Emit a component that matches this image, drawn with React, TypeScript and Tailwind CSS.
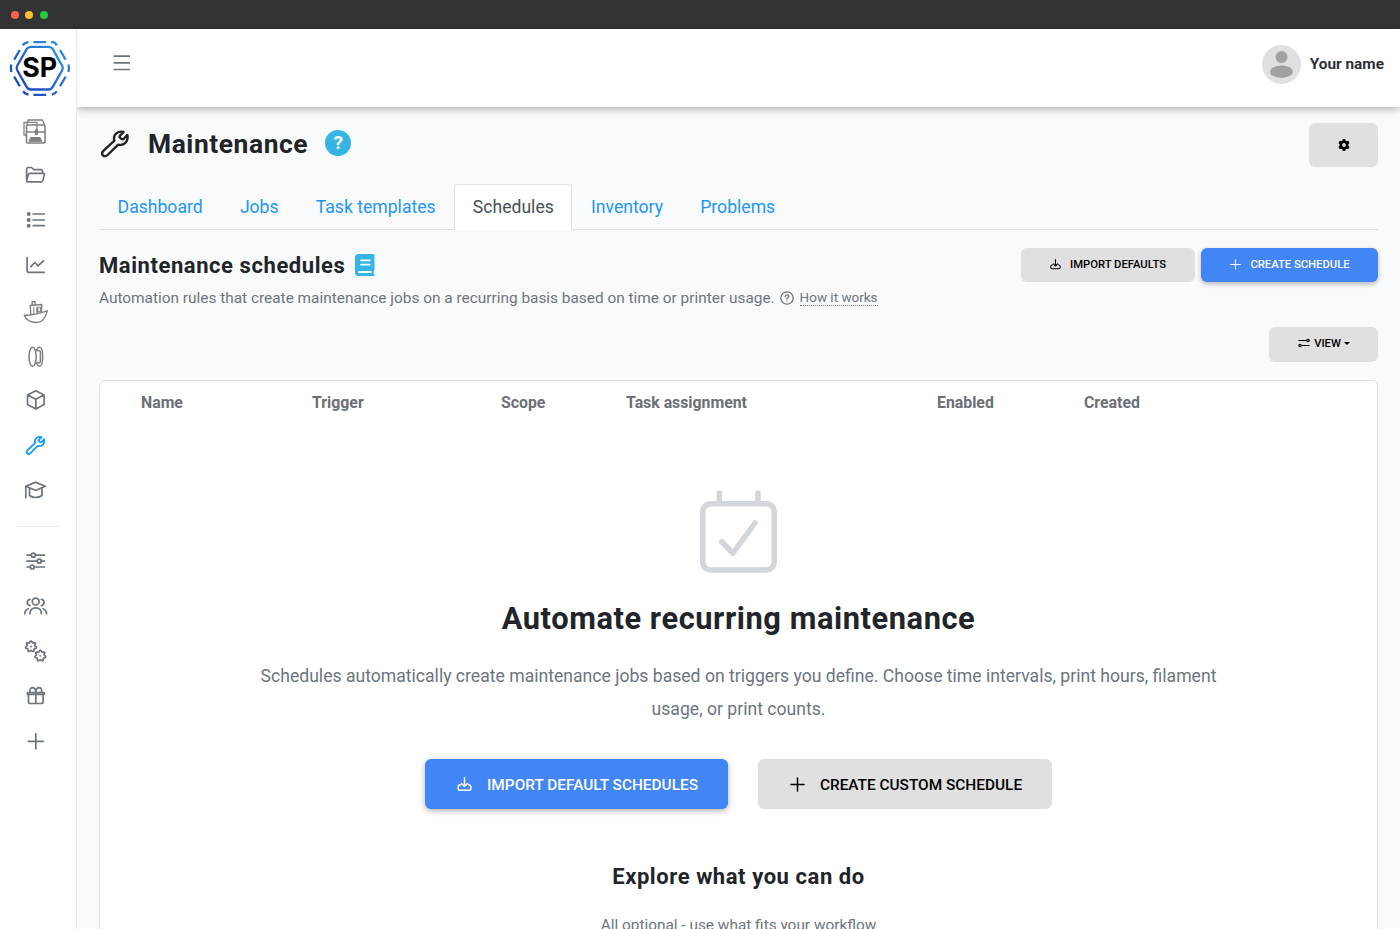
import type { ReactNode } from "react";

const tabs = ["Dashboard", "Jobs", "Task templates", "Schedules", "Inventory", "Problems"];
const activeTab = "Schedules";

const columns = ["Name", "Trigger", "Scope", "Task assignment", "Enabled", "Created"];

const wrenchPath =
  "M22.6 2C17.5.6 13 4 13 8.2c0 1 .1 1.6.4 2.4L2.4 20.8C.7 22.5.9 24.3 1.9 25.3 3.2 26.6 5.2 26.4 6.6 25L17.2 14.6C22.6 16.2 27.9 11.5 26.3 4.9L22.8 8.8Q21.6 9.8 19.9 8.6 18 7.2 19 5.6Z";

// wavy outline with seven teeth
const gearPoints = Array.from({ length: 56 }, (_, i) => {
  const angle = (i / 56) * Math.PI * 2;
  const radius = 4.7 + 0.85 * Math.cos(7 * angle);
  return `${(radius * Math.sin(angle)).toFixed(2)},${(-radius * Math.cos(angle)).toFixed(2)}`;
}).join(" ");

function WrenchIcon({ className }: { className?: string }) {
  return (
    <svg viewBox="0 0 28 28" className={className} fill="none" stroke="currentColor" strokeWidth="2.4" strokeLinejoin="round" strokeLinecap="round">
      <path d={wrenchPath} />
    </svg>
  );
}

function PlusIcon({ className }: { className?: string }) {
  return (
    <svg viewBox="0 0 16 16" className={className} fill="none" stroke="currentColor" strokeWidth="1.6" strokeLinecap="round">
      <path d="M8 1v14M1 8h14" />
    </svg>
  );
}

function ImportIcon({ className }: { className?: string }) {
  return (
    <svg viewBox="0 0 16 16" className={className} fill="none" stroke="currentColor" strokeWidth="1.6" strokeLinecap="round" strokeLinejoin="round">
      <path d="M8 .8v9M4.8 7 8 10.2 11.2 7" />
      <path d="M3.6 8.3C1.8 8.5 1.2 9.5 1.2 10.9v1.6c0 1 .7 1.7 1.7 1.7h10.2c1 0 1.7-.7 1.7-1.7v-1.6c0-1.4-.6-2.4-2.4-2.6" />
    </svg>
  );
}

function GearShape({ x, y }: { x: number; y: number }) {
  return (
    <g transform={`translate(${x} ${y})`}>
      <polygon points={gearPoints} />
      <circle r=".3" strokeWidth="1.3" />
    </g>
  );
}

function Icon({ children, active }: { children: ReactNode; active?: boolean }) {
  return (
    <li className={active ? "flex h-[45px] items-center text-[#189cf0]" : "flex h-[45px] items-center text-[#6c757d]"}>
      <svg viewBox="0 0 32 32" className="ml-[19px] h-8 w-8 overflow-visible" fill="none" stroke="currentColor" strokeWidth="1.7" strokeLinecap="round" strokeLinejoin="round">
        {children}
      </svg>
    </li>
  );
}

function Logo() {
  return (
    <svg viewBox="0 0 76 76" className="block h-[76px] w-[76px]" fill="none">
      <defs>
        <linearGradient id="logo" x1="0" y1="1" x2="1" y2="0">
          <stop offset="0" stopColor="#1d3bbd" />
          <stop offset="1" stopColor="#2a9ade" />
        </linearGradient>
      </defs>
      <g stroke="url(#logo)" strokeWidth="2.3">
        <path d="M30.5 17.8h18.4q2.4 0 3.7 2.1l9.6 16.8q1.3 2.3 0 4.6l-9.6 16.8q-1.3 2.4-3.7 2.4h-18.4q-2.4 0-3.7-2.4l-9.6-16.8q-1.3-2.3 0-4.6l9.6-16.8q1.3-2.1 3.7-2.1Z" />
        <path d="M33.5 13.2h12.7M51 13.2h2q2.5.3 3.8 3.2M60 21l5.6 9.6M68.5 35.5q.8 3.5 0 7.5M65.6 47.6l-5.6 9.7M56.8 62.2q-1.5 2.8-5 3.4M46.2 65.8H33.5M28.5 65.6q-3.6-.5-5.3-3.4M19.8 57.3l-5.6-9.7M11.3 43q-.8-3.8 0-7.5M14.2 30.6 19.8 21M22.8 16.4q1.7-2.8 5.7-3.2" />
      </g>
      <text x="39.8" y="48.4" textAnchor="middle" fill="#000" fontSize="26.8" fontWeight="700" fontFamily="Inter, sans-serif">SP</text>
    </svg>
  );
}

function Sidebar() {
  return (
    <aside className="relative z-20 w-[77px] shrink-0 border-r border-[#ececee] bg-white">
      <Logo />
      <ul className="mt-[2.5px]">
        <Icon>
          <g stroke="#808080" strokeWidth="1.6" transform="translate(.5 1.500)">
            <rect x="7" y="9.500" width="18.500" height="18" rx="1" />
            <path d="M7.500 9 8.500 4.500h14.500l2 5M6.500 7h-2v12.500h1.500M8.500 6.800h9V14M7 16.500h18" strokeWidth="1.300" />
            <path d="M17 14v5.500" strokeWidth="3.200" strokeLinecap="butt" />
            <path d="M11.500 22h9l1.800 3.800H9.700Z" fill="#808080" strokeWidth="1" />
          </g>
        </Icon>
        <Icon>
          <path d="M7.600 21V10.200Q7.600 8.500 9.300 8.500h3.200l2.300 2.200h6.900q1.800 0 1.800 1.800v1.500M10.800 14.300h13.700q1.200 0 .9 1.300l-1.500 5.900q-.4 1.400-1.800 1.400H9.300Q7.300 22.900 7.900 20.900l1.400-5.300q.3-1.300 1.500-1.300Z" />
        </Icon>
        <Icon>
          <path d="M14.200 10H25.200M14.200 16H25.200M14.200 21.700H25.200" />
          <path d="M9.700 10h0M9.700 16h0M9.700 21.700h0" strokeWidth="4" />
        </Icon>
        <Icon>
          <path d="M8.100 8.500V21.500Q8.100 23.300 9.900 23.300H25.300M11.800 17.600 15.800 13.500 19 16.800 24.500 11.800" />
        </Icon>
        <Icon>
          <g stroke="#808080" strokeWidth="1.400" transform="translate(.8 0)">
            <path d="M4.400 21.300Q16 21 27.500 16.800 24.500 28.500 17 28.500 7.500 28.600 4.400 21.300Z" />
            <path d="M11 20.200 10.400 11.500 22 10.500 21.600 18.300M12.300 11V7.800h3V11" />
            <path d="M14 13.500v6.300M17 13.500v5.500M18 13.200h2.600v4.300l-2.600.6Z" strokeWidth="1.100" />
          </g>
        </Icon>
        <Icon>
          <g stroke="#808080" strokeWidth="1.500" transform="translate(.9 0)">
            <ellipse cx="12.700" cy="17.700" rx="3.600" ry="9.500" />
            <path d="M16.800 11Q18 8.200 19.500 8.200C21.500 8.200 22.800 12 22.800 17.700S21.500 27.200 19.500 27.200Q18 27.200 16.800 24.500" />
            <path d="M15.800 11.500h2.700q2 0 2 2v8.500q0 2-2 2h-2.700" />
          </g>
        </Icon>
        <Icon>
          <path d="M16.800 6.700 25.100 11v9.500L16.800 25 8.500 20.500V11ZM8.700 11.100 16.800 15.300l8.100-4.200M16.800 15.300V25" />
        </Icon>
        <Icon active>
          <svg x="6.800" y="6.700" width="19.500" height="19.500" viewBox="0 0 28 28">
            <path d={wrenchPath} strokeWidth="2.700" />
          </svg>
        </Icon>
        <Icon>
          <path d="M6.800 12.300 15.800 8.600Q16.700 8.300 17.600 8.600L26.300 12.300 17.600 16Q16.700 16.300 15.800 16ZM6.800 12.300V23.700M10.500 14.500V21.500Q13 23.500 16.700 23.500T23 21.500V14.500" />
        </Icon>
      </ul>
      <hr className="mt-[13.5px] ml-[17px] w-[43px] border-t border-[#e9e9eb]" />
      <ul className="mt-[11px]">
        <Icon>
          <path d="M8 10.200H12.200M16.400 10.200H25.400M8 16.200H18.200M22.400 16.200h3M8 22h3.300M15.400 22H25.400" />
          <circle cx="14.300" cy="10.200" r="2" />
          <circle cx="20.300" cy="16.200" r="2" />
          <circle cx="13.300" cy="22" r="2" />
        </Icon>
        <Icon>
          <circle cx="16.700" cy="11.600" r="3.400" />
          <path d="M11 23.700Q11 17.800 16.700 17.800T22.400 23.700M11 9.300Q8.300 9.600 8.300 12.500 8.500 15.100 11 15.600M22.400 9.300Q25.100 9.600 25.100 12.500 24.900 15.100 22.400 15.600M5.800 23.700Q6 19.900 9.200 18.700M27.600 23.700Q27.400 19.900 24.200 18.700" />
        </Icon>
        <Icon>
          <GearShape x={12} y={11.5} />
          <GearShape x={21.3} y={20.8} />
        </Icon>
        <Icon>
          <path d="M8.400 12.500h16.800v1.800H8.400ZM9.500 14.700V21.700Q9.500 23.500 11.300 23.500H22.300Q24.100 23.500 24.100 21.700V14.700M16.800 12v11.400M16.800 11.700Q16.300 7.700 13.500 7.700 10.300 8.200 11 11.700M16.800 11.700Q17.300 7.700 20.100 7.700 23.300 8.200 22.600 11.700" />
        </Icon>
        <Icon>
          <path d="M16.800 8.800V23.800M9.300 16.300H24.300" />
        </Icon>
      </ul>
    </aside>
  );
}

function Header() {
  return (
    <header className="relative z-10 flex h-[77.5px] shrink-0 items-center justify-between bg-white pr-4 pl-9 shadow-[0_2px_8px_rgba(0,0,0,0.3)]">
      <svg viewBox="0 0 18 16" className="mt-[-9px] h-4 w-[18px] text-[#6c757d]" fill="none" stroke="currentColor" strokeWidth="1.700">
        <path d="M.6 1.200h16.400M.6 7.900h16.400M.6 14.500h16.400" />
      </svg>
      <div className="mt-[-7px] flex items-center gap-[9px]">
        <svg viewBox="0 0 39 39" className="mt-[1px] h-[39px] w-[39px]">
          <circle cx="19.5" cy="19.5" r="19.5" fill="#e0e0e0" />
          <circle cx="19.5" cy="12" r="6" fill="#a1a1a1" />
          <ellipse cx="19.5" cy="26.700" rx="11.5" ry="6.200" fill="#a1a1a1" />
        </svg>
        <span className="text-[15.4px] font-bold text-[#2d3136]">Your name</span>
      </div>
    </header>
  );
}

function PageTitle() {
  return (
    <div className="flex h-11 items-start justify-between">
      <div className="flex h-[42px] items-center">
        <WrenchIcon className="mt-[-1px] ml-[2px] h-7 w-7 text-[#212529]" />
        <h1 className="mt-px ml-[19px] text-[26.4px] font-bold tracking-[0.57px] text-[#212529]">Maintenance</h1>
        <span className="mt-[-2px] ml-[17px] flex h-[26px] w-[26px] items-center justify-center rounded-full bg-[#34b5e5] text-[19px] font-bold text-white">?</span>
      </div>
      <button className="flex h-11 w-[69px] items-center justify-center rounded-md bg-[#e0e0e0] text-black">
        <svg viewBox="0 0 12 12" className="h-3 w-3" fill="currentColor" fillRule="evenodd">
          <path d="M4.900 0h2.200l.4 1.600 1.100.6 1.600-.5 1.400 2.300-1.200 1.100v1.800l1.200 1.100-1.400 2.300-1.600-.5-1.100.6L7.100 12H4.900l-.4-1.600-1.100-.6-1.600.5L.4 8l1.200-1.100V5.100L.4 4l1.400-2.300 1.600.5 1.100-.6ZM6 4.100a1.900 1.900 0 1 0 0 3.800 1.900 1.900 0 0 0 0-3.800Z" />
        </svg>
      </button>
    </div>
  );
}

function Tabs() {
  return (
    <nav className="mt-[17px] flex h-[46px] border-b border-[#dee2e6]">
      {tabs.map((tab) => (
        <a
          key={tab}
          className={
            tab === activeTab
              ? "h-[46px] rounded-t border border-b-0 border-[#dee2e6] bg-white px-[17.6px] pt-[9px] text-[17.6px] text-[#495057]"
              : "h-[46px] border border-b-0 border-transparent px-[17.6px] pt-[9px] text-[17.6px] text-[#2196f3]"
          }
        >
          {tab}
        </a>
      ))}
    </nav>
  );
}

function SectionHeading() {
  return (
    <div className="mt-[18px] flex items-start justify-between">
      <div>
        <div className="flex h-[34px] items-center">
          <h2 className="text-[22px] font-bold tracking-[0.57px] text-[#212529]">Maintenance schedules</h2>
          <svg viewBox="0 0 20 22" className="mt-[-1px] ml-[10px] h-[22px] w-5">
            <path d="M3.5 0H18.5Q19.5 0 19.5 1.3V15.5Q19.5 16.5 18.7 17V20Q19.5 20.3 19.5 21V22H3.5Q0 22 0 18.5V3.5Q0 0 3.5 0Z" fill="#34b5e5" />
            <path d="M6 6.300h8.800M6 10.600h8.800M4 18h11.800" stroke="#fff" strokeWidth="1.800" strokeLinecap="round" />
          </svg>
        </div>
        <p className="mt-[5px] flex items-center text-[15.4px] leading-[22px] text-[#6c757d]">
          Automation rules that create maintenance jobs on a recurring basis based on time or printer usage.
          <svg viewBox="0 0 14 14" className="ml-[5px] h-[14px] w-[14px]" fill="none" stroke="currentColor" strokeWidth="1.300" strokeLinecap="round">
            <circle cx="7" cy="7" r="6.200" />
            <path d="M5.200 5.500Q5.400 3.800 7 3.800T8.800 5.400Q8.700 6.300 7.700 6.800 7 7.200 7 8M7 10.100h0" />
          </svg>
          <span className="mt-px ml-[6px] border-b border-dotted border-[#6c757d] text-[13.475px] leading-[14px]">How it works</span>
        </p>
      </div>
      <div className="flex gap-[6px] text-[11.26px] font-medium">
        <button className="flex h-[34px] w-[174px] items-center justify-center rounded-md bg-[#e0e0e0] text-black">
          <ImportIcon className="mt-[-1px] mr-[9px] h-[11px] w-[11px]" />
          IMPORT DEFAULTS
        </button>
        <button className="flex h-[34px] w-[177px] items-center justify-center rounded-md bg-[#4285f4] pl-px text-white shadow-[0_2px_5px_rgba(0,0,0,0.28)]">
          <PlusIcon className="mt-[-1px] mr-[9px] h-[11px] w-[11px]" />
          CREATE SCHEDULE
        </button>
      </div>
    </div>
  );
}

function EmptyState() {
  return (
    <div className="flex flex-col items-center">
      <svg viewBox="0 0 77 83" className="mt-[65px] h-[83px] w-[77px]" fill="none" stroke="#d3d6da" strokeWidth="5.5" strokeLinecap="round" strokeLinejoin="round">
        <rect x="2.75" y="13.8" width="71.5" height="66.2" rx="8" />
        <path d="M19.3 3v9M57.9 3v9M21.8 51.8 33 63.2 55 33" />
      </svg>
      <h2 className="mt-[24px] text-[30.8px] leading-[44px] font-bold tracking-[0.57px] text-[#212529]">Automate recurring maintenance</h2>
      <p className="mt-[19px] w-[980px] text-center text-[17.6px] leading-[33px] text-[#6c757d]">
        Schedules automatically create maintenance jobs based on triggers you define. Choose time intervals, print hours, filament
        <br />
        usage, or print counts.
      </p>
      <div className="mt-[33px] flex gap-[30px] text-[15.4px] font-medium">
        <button className="flex h-[50px] w-[303px] items-center justify-center rounded-md bg-[#4285f4] pt-[3px] pl-[2px] text-white shadow-[0_2px_6px_rgba(0,0,0,0.3)]">
          <ImportIcon className="mt-[-3px] mr-[15px] h-[15px] w-[15px]" />
          IMPORT DEFAULT SCHEDULES
        </button>
        <button className="flex h-[50px] w-[294px] items-center justify-center rounded-md bg-[#e0e0e0] pt-[3px] pl-[2px] text-black">
          <PlusIcon className="mt-[-3px] mr-[15px] h-[15px] w-[15px]" />
          CREATE CUSTOM SCHEDULE
        </button>
      </div>
      <h3 className="mt-[51px] text-[22px] leading-[33px] font-bold tracking-[0.57px] text-[#212529]">Explore what you can do</h3>
      <p className="mt-[21px] text-[15.4px] leading-[22px] text-[#6c757d]">All optional - use what fits your workflow</p>
    </div>
  );
}

export default function App() {
  return (
    <div className="flex h-[929px] flex-col overflow-hidden bg-[#f9fafc] font-[Roboto,sans-serif]">
      <div className="flex h-[29px] shrink-0 items-center gap-[6px] bg-[#333333] pl-[11px]">
        <span className="h-2 w-2 rounded-full bg-[#ff5f57]" />
        <span className="h-2 w-2 rounded-full bg-[#febc2e]" />
        <span className="ml-px h-2 w-2 rounded-full bg-[#28c840]" />
      </div>

      <div className="flex min-h-0 flex-1">
        <Sidebar />
        <div className="flex min-w-0 flex-1 flex-col">
          <Header />
          <main className="min-h-0 flex-1 overflow-hidden px-[22px] pt-[16.5px]">
            <PageTitle />
            <Tabs />
            <SectionHeading />
            <div className="mt-[18px] flex justify-end">
              <button className="flex h-[35px] w-[109px] items-center justify-center rounded-md bg-[#e0e0e0] pl-px text-[11.26px] font-medium text-black">
                <svg viewBox="0 0 12 10" className="mt-[-3px] mr-1 h-[10px] w-3" fill="none" stroke="currentColor" strokeWidth="1.200">
                  <path d="M.5 2.500H8.500M3.500 7.500h8" />
                  <circle cx="10" cy="2.500" r="1.200" />
                  <circle cx="2" cy="7.500" r="1.200" />
                </svg>
                VIEW
                <span className="mt-[-2px] ml-[3px] border-x-[3px] border-t-[3px] border-x-transparent border-t-black" />
              </button>
            </div>
            <section className="mt-[18px] h-[700px] rounded-md border border-[#dee2e6] bg-white">
              <div className="grid h-11 grid-cols-[171px_189px_125px_311px_147px_1fr] items-center pl-[41px] text-[15.84px] font-bold text-[#6c6f75]">
                {columns.map((column) => (
                  <span key={column}>{column}</span>
                ))}
              </div>
              <EmptyState />
            </section>
          </main>
        </div>
      </div>
    </div>
  );
}
